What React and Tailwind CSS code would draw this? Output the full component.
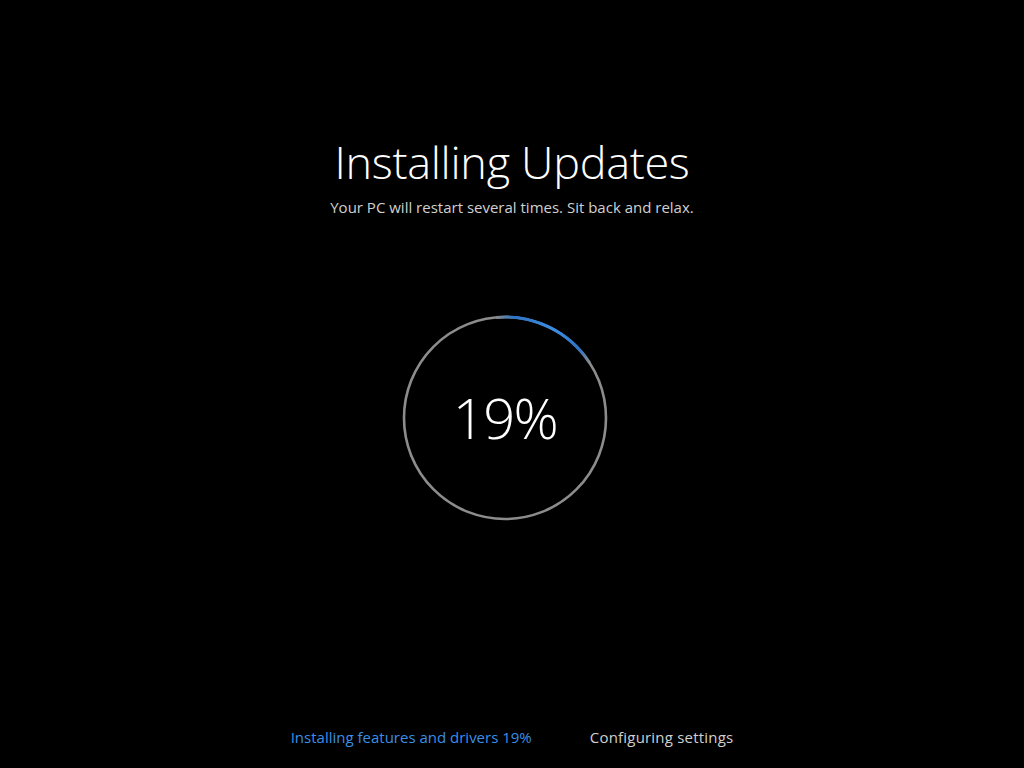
import React from 'react';

const FONT = { fontFamily: '"Open Sans", "Noto Sans", "Liberation Sans", sans-serif' };

function ProgressRing({ percent }) {
  const cx = 104;
  const cy = 104;
  const r = 101;
  // blue arc roughly covers the top right, from just before 12 o'clock
  const start = -5;
  const end = 57;
  const pt = (deg) => {
    const a = ((deg - 90) * Math.PI) / 180;
    return [cx + r * Math.cos(a), cy + r * Math.sin(a)];
  };
  const [x1, y1] = pt(start);
  const [x2, y2] = pt(end);

  return (
    <div className="relative w-[208px] h-[208px]">
      <svg width="208" height="208" viewBox="0 0 208 208" className="absolute inset-0">
        <defs>
          <linearGradient id="arc" x1={x1} y1={y1} x2={x2} y2={y2} gradientUnits="userSpaceOnUse">
            <stop offset="0" stopColor="#8a8a8a" />
            <stop offset="0.15" stopColor="#2b74c8" />
            <stop offset="0.55" stopColor="#3a8ee6" />
            <stop offset="0.85" stopColor="#2b74c8" />
            <stop offset="1" stopColor="#8a8a8a" />
          </linearGradient>
        </defs>
        <circle cx={cx} cy={cy} r={r} fill="none" stroke="#8c8c8c" strokeWidth="2.6" />
        <path
          d={`M ${x1} ${y1} A ${r} ${r} 0 0 1 ${x2} ${y2}`}
          fill="none"
          stroke="url(#arc)"
          strokeWidth="3"
        />
      </svg>
      <div className="absolute inset-0 flex items-center justify-center">
        <span className="text-white text-[56px] font-light leading-none tracking-[-1.5px] mt-[-2px]" style={FONT}>
          {percent}%
        </span>
      </div>
    </div>
  );
}

export default function App() {
  return (
    <div className="w-full h-[768px] bg-black flex flex-col items-center overflow-hidden" style={FONT}>
      <h1 className="mt-[132px] text-white text-[45px] font-light leading-[60px] tracking-[-0.3px]">
        Installing Updates
      </h1>
      <p className="mt-[5px] text-[#d0d0d0] text-[15px] leading-[20px]">
        Your PC will restart several times. Sit back and relax.
      </p>

      <div className="mt-[97px] mr-[14px]">
        <ProgressRing percent={19} />
      </div>

      <div className="mt-auto mb-[21px] flex items-center gap-[58px] text-[15px] leading-[20px]">
        <span className="text-[#3a8ee6]">Installing features and drivers 19%</span>
        <span className="text-[#d0d0d0] tracking-[0.2px]">Configuring settings</span>
      </div>
    </div>
  );
}
